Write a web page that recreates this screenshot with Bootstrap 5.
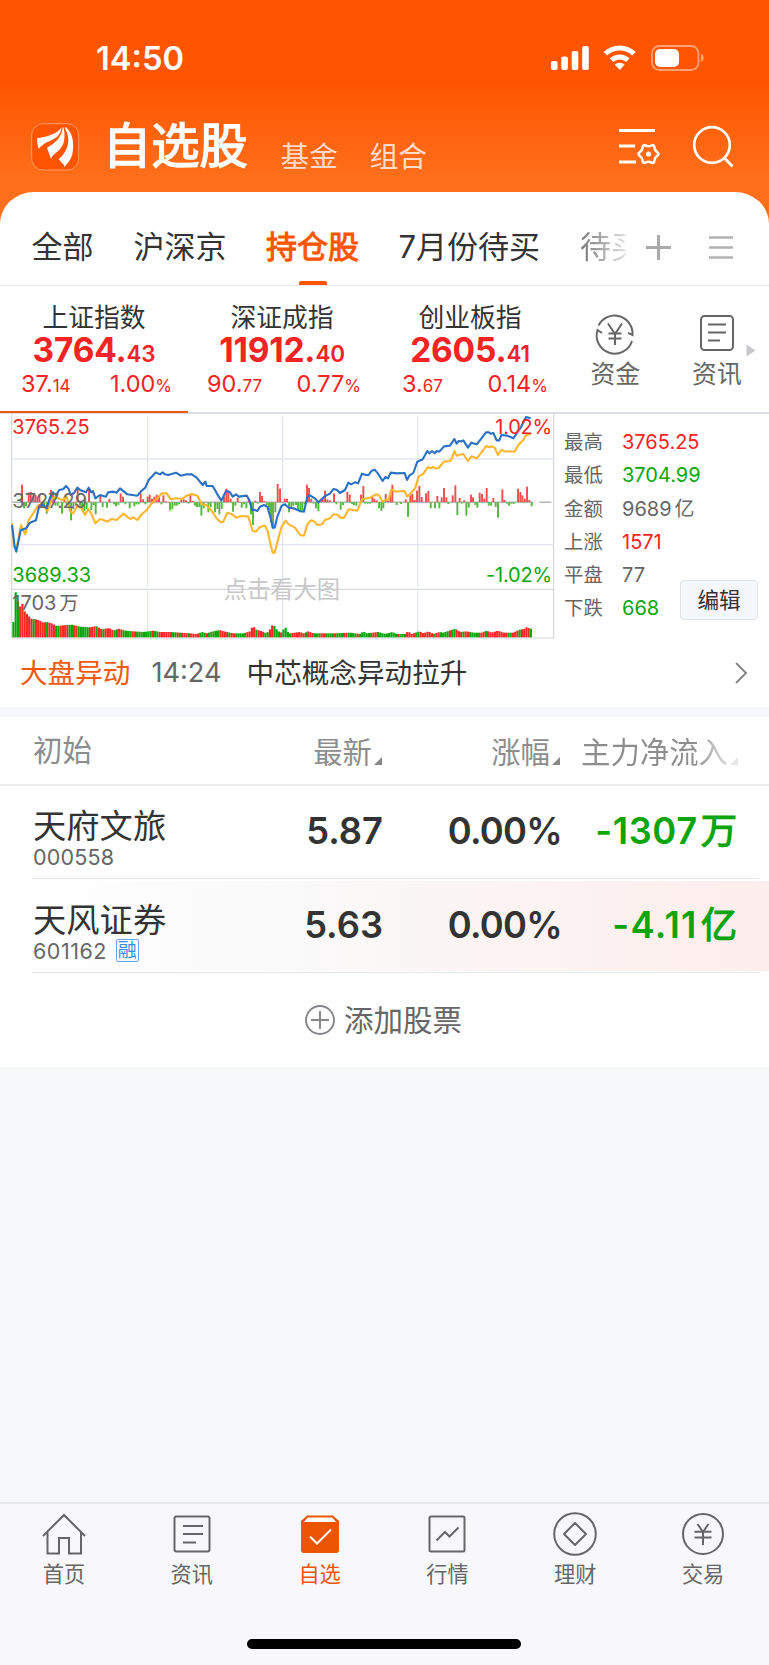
<!DOCTYPE html>
<html lang="zh-CN">
<head>
<meta charset="utf-8">
<meta name="viewport" content="width=device-width, initial-scale=1">
<title>自选股</title>
<link href="https://cdn.jsdelivr.net/npm/bootstrap@5.3.0/dist/css/bootstrap.min.css" rel="stylesheet">
<style>
:root{--ink:#333;--mute:#666;--up:#f52323;--down:#0aa50a;--brand:#ff5500}
body{font-family:Inter,"Noto Sans CJK SC",sans-serif;color:var(--ink);background:#f7f8fa;width:769px;overflow-x:hidden}
svg{display:block;flex:none;overflow:visible}
.phone{min-height:1665px;background:#f7f8fa}
.top-area{background:linear-gradient(#ff5500 0,#ff5500 80px,#ff6f1b 180px,#ff7019 100%);height:286px}
.status{height:108px;padding:0 65px 0 96px}
.clock{font-size:32.7px;font-weight:600;line-height:40px}
.brandbar{height:84px;padding:0 35px 6px 31px}
.brandbar h1{font-size:48.2px;font-weight:400;-webkit-text-stroke:1.5px #fff;line-height:60px;margin:0 1px 2px 24px}
.brandbar .sub{font-size:28.6px;line-height:36px;color:#ffdccb;margin-top:19px}
.sheet{background:#fff;border-radius:34px 34px 0 0/32px 32px 0 0;height:94px;border-bottom:1px solid #ebebee}
.tabs-row{height:93px;padding:14px 0 0 31.5px;font-size:31px;line-height:44px}
.tabs-row .tab{height:79px;padding-top:19px;white-space:nowrap}
.tab.on{color:var(--brand);-webkit-text-stroke:1px var(--brand);border:0}
.tab.on i{display:block;width:28px;height:4px;border-radius:2px 2px 0 0;background:var(--brand);margin:12px auto 0}
.fading{width:62px;margin-right:-15px;color:transparent!important;background:linear-gradient(90deg,#777,#ddd 70%,#fff 76%);-webkit-background-clip:text;background-clip:text}
.indices{height:128px;background:#fff;border-bottom:2px solid #d9dce2}
.idx{width:188px;height:127px;padding-top:15px;text-align:center}
.idx.on{border-bottom:2.5px solid #f0590e}
.idx .nm{font-size:25.8px;line-height:34px}
.idx .val{font-size:33.5px;font-weight:700;line-height:32px;color:var(--up);letter-spacing:-.2px;margin-top:-1px}
.idx .val small{font-size:22.5px;font-weight:600}
.idx .chg{font-size:23.5px;line-height:32px;color:var(--up);margin-top:-2px;padding:0 16px 0 21px}
.idx .chg small{font-size:17px}
.quick{font-size:24.8px;line-height:32px;color:var(--mute)}
.chart-row{height:227px;background:#fff;padding-left:11px}
.stats{width:215px;padding:12px 0 0 10px;font-size:19.4px;line-height:33.25px;color:var(--mute)}
.stats dl{display:grid;grid-template-columns:58px 1fr;margin:0}
.stats dt{font-weight:400}.stats dd{margin:0;font-size:20px;letter-spacing:0}
.edit{right:11px;top:166px;width:78px;height:40px;background:#f6f7fa;border:1.5px solid #dfe2e7;border-radius:4px;font-size:21.6px;color:#333;padding:0;line-height:34px}
.c-up{color:var(--up)!important}.c-down{color:var(--down)!important}
.news{height:66px;background:#fff;padding:0 22px 2px 20px;font-size:27.6px;line-height:40px}
.band{height:10px;background:#f6f7fa}
.quotes{background:#fff;height:350px}
.cols{display:grid;grid-template-columns:1fr 190px 178px 209px}
.cols-head{height:69px;border-bottom:2px solid #f0f0f3;font-size:29.4px;color:#8d8d8d;padding:4px 0 0 33px;line-height:40px}
.hd{display:flex;justify-content:flex-end;align-items:center}
.hd svg{margin:16px 0 0 2px}
.stock{height:94px;position:relative}
.cols-head+.stock{margin-top:-1px}
.stock.hot{background:linear-gradient(90deg,#fff 2%,#faf9f9 40%,#fcf2f1 75%,#fdeded) 0 2px/100% 90px no-repeat}
.stock::after{content:"";position:absolute;left:32px;right:10px;bottom:0;height:1px;background:#e6e7ea}
.stock .cols{height:94px;padding-left:33px}
.stock .nm{font-size:33.3px;line-height:38px;margin-top:22px}
.stock .code{font-size:21.5px;line-height:24px;color:var(--mute);letter-spacing:.2px}
.fig{font-size:36.3px;font-weight:600;line-height:44px;text-align:right;margin-top:24px;white-space:nowrap}
.fig .unit{font-weight:400;-webkit-text-stroke:1.1px currentColor;letter-spacing:0;margin-left:3px}
.pct{letter-spacing:-.7px;margin-right:-2px}
.tagr{font-size:19px;line-height:21px;width:23px;height:23px;border:1px solid #6aa5e8;color:#3c8ae6;border-radius:2px;margin-left:9px;text-align:center;letter-spacing:0}
.add{height:94px;font-size:29.5px;line-height:40px;color:var(--mute)}
.gap-area{height:435px;background:#f7f8fa}
.dock{height:163px;border-top:2px solid #e8e9ec;background:#f8f8fb;display:grid;grid-template-columns:repeat(6,1fr);position:relative;color:var(--mute);font-size:21.2px;line-height:28px;text-align:center;padding-right:2px}
.dock svg{margin:8px auto 4px}
.dock .on{color:#eb5503}
.homebar{left:247px;top:135px;width:274px;height:10px;border-radius:5px;background:#000}
</style>
</head>
<body>
<div class="phone">
 <header class="top-area">
  <div class="status d-flex align-items-center justify-content-between text-white pt-1">
   <span class="clock pt-1">14:50</span>
   <svg class="mt-1" width="153" height="26" viewBox="0 0 153 26" fill="#fff"><rect x="0" y="16" width="6.600" height="9" rx="2"/><rect x="10.300" y="11.500" width="6.600" height="13.500" rx="2"/><rect x="20.700" y="6" width="6.600" height="19" rx="2"/><rect x="31.200" y="1" width="6.600" height="24" rx="2"/>
    <g fill="none" stroke="#fff" stroke-width="5"><path d="M54.400 8.700a20.500 20.500 0 0 1 28.600 0"/><path d="M60.500 15.200a12 12 0 0 1 16.400 0"/></g><path d="M63.700 19.600a7.500 7.500 0 0 1 10 0l-5 5.400z"/>
    <rect x="101" y="1" width="46.500" height="24" rx="7.500" fill="none" stroke="#fff" stroke-opacity=".45" stroke-width="1.800"/><rect x="104" y="4" width="24" height="18" rx="5"/><path d="M150 9c3.500 1 3.500 7 0 8z" fill-opacity=".5"/></svg>
  </div>
  <div class="brandbar d-flex align-items-center text-white">
   <svg width="48" height="48" viewBox="32 53 144 144"><rect x="34" y="55" width="141" height="139" rx="34" fill="#ff5500" stroke="#ff9a63" stroke-width="3"/><g fill="#fff"><path d="M50 99C78 94 106 88 123 67C121 88 109 98 90 106C73 113 60 122 56 131C51 122 50 108 50 99Z"/><path d="M127 66C125 95 107 112 80 127L92 161C98 147 111 141 121 129C135 111 134 88 130 67Z"/><path d="M137 66C158 84 162 115 156 147C151 165 141 174 133 185C129 174 121 170 115 162C131 148 144 128 144 104C144 88 139 78 133 67Z"/></g></svg>
   <h1>自选股</h1><span class="sub" style="margin-left:32px">基金</span><span class="sub" style="margin-left:32px">组合</span>
   <svg class="ms-auto" width="42" height="40" viewBox="0 0 42 40" fill="none" stroke="#fff" stroke-width="2.800"><path d="M0 3.500h36M0 19h16M0 35h17"/><path transform="translate(29.500 27) scale(.93)" d="M9.390-1.900Q12.200 0 9.390 1.900Q6.580 3.800 6.340 7.190Q6.100 10.570 3.050 9.090Q0 7.600-3.050 9.090Q-6.100 10.570-6.340 7.190Q-6.580 3.800-9.390 1.900Q-12.200 0-9.390-1.900Q-6.580-3.800-6.340-7.190Q-6.100-10.570-3.050-9.090Q0-7.600 3.050-9.090Q6.100-10.570 6.340-7.190Q6.580-3.800 9.390-1.900Z"/><circle cx="29.500" cy="27" r="2.600" fill="#fff" stroke="none"/></svg>
   <svg style="margin-left:32px" width="41" height="42" viewBox="0 0 41 42" fill="none" stroke="#fff" stroke-width="2.700"><circle cx="19" cy="19" r="17.800"/><path d="M31.500 32l8 8.500"/></svg>
  </div>
  <div class="sheet"><nav class="tabs-row d-flex">
   <span class="tab">全部</span><span class="tab" style="margin-left:40px">沪深京</span><span class="tab on" style="margin-left:39.500px">持仓股<i></i></span><span class="tab" style="margin-left:39.500px">7月份待买</span><span class="tab fading" style="margin-left:40px">待买</span>
   <svg style="margin:29px 0 0 18.500px" width="25" height="25" viewBox="0 0 25 25" stroke="#aaa" stroke-width="3"><path d="M0 12.500h25M12.500 0v25"/></svg>
   <svg style="margin:30px 0 0 38px" width="24" height="24" viewBox="0 0 24 24" stroke="#b3b3b3" stroke-width="2.700"><path d="M0 1.500h24M0 11.500h24M0 21.500h24"/></svg>
  </nav></div>
 </header>
 <section class="indices d-flex">
  <div class="idx on"><div class="nm">上证指数</div><div class="val">3764.<small>43</small></div><div class="chg d-flex justify-content-between align-items-baseline"><span>37.<small>14</small></span><span>1.00<small>%</small></span></div></div>
  <div class="idx"><div class="nm">深证成指</div><div class="val">11912.<small>40</small></div><div class="chg d-flex justify-content-between align-items-baseline" style="padding:0 15px 0 19px"><span>90.<small>77</small></span><span>0.77<small>%</small></span></div></div>
  <div class="idx"><div class="nm">创业板指</div><div class="val">2605.<small>41</small></div><div class="chg d-flex justify-content-between align-items-baseline" style="padding-left:26px"><span>3.<small>67</small></span><span>0.14<small>%</small></span></div></div>
  <div class="quick d-flex" style="padding:27.500px 0 0 26.500px">
   <div><svg class="mx-auto" width="38" height="38" viewBox="0 0 38 38" fill="none" stroke="#666" stroke-width="2"><path d="M2.500 11.500A18 18 0 0 1 36.500 21l-4.500-2.200M36 27A18 18 0 0 1 1.500 16l4.500 3M12 9.500l7 10.500 7-10.500M12.500 19.500h13M12.500 24.500h13M19 20v11"/></svg><div style="margin-top:6px">资金</div></div>
   <div style="margin-left:52px"><svg class="mx-auto" width="34" height="38" viewBox="0 0 34 38" fill="none" stroke="#666" stroke-width="2"><rect x="1" y="2" width="32" height="34" rx="3.500"/><path d="M8 10.500h18M8 18.500h18M8 26.500h12"/></svg><div style="margin-top:6px">资讯</div></div>
   <svg style="margin:30px 0 0 4px" width="10" height="13" viewBox="0 0 10 13"><path d="M.5.500v12l9-6z" fill="#c8c8cc"/></svg>
  </div>
 </section>
 <section class="chart-row d-flex position-relative">
  <svg id="trend" width="543" height="227" viewBox="33 27 1629 681"></svg>
  <div class="stats"><dl><dt>最高</dt><dd class="c-up">3765.25</dd><dt>最低</dt><dd class="c-down">3704.99</dd><dt>金额</dt><dd>9689<span style="margin-left:3px">亿</span></dd><dt>上涨</dt><dd class="c-up">1571</dd><dt>平盘</dt><dd>77</dd><dt>下跌</dt><dd class="c-down">668</dd></dl></div>
  <button class="btn edit position-absolute">编辑</button>
 </section>
 <section class="news d-flex align-items-center"><span style="color:#f0590e">大盘异动</span><span style="margin-left:21px;color:#666;font-size:27.200px">14:24</span><span style="margin-left:25px">中芯概念异动拉升</span><svg class="ms-auto" width="12" height="22" viewBox="0 0 12 22" fill="none" stroke="#888" stroke-width="2"><path d="M1 1l10 10-10 10"/></svg></section>
 <div class="band"></div>
 <main class="quotes">
  <div class="cols cols-head"><div class="hd justify-content-start pb-1">初始</div><div class="hd">最新<svg width="8" height="8"><path d="M8 0v8H0z" fill="#888"/></svg></div><div class="hd">涨幅<svg width="8" height="8"><path d="M8 0v8H0z" fill="#888"/></svg></div><div class="hd" style="padding-right:31px"><span style="color:transparent;background:linear-gradient(90deg,#8d8d8d 76%,#ddd);-webkit-background-clip:text;background-clip:text">主力净流入</span><svg width="8" height="8"><path d="M8 0v8H0z" fill="#e6e6ea"/></svg></div></div>
  <div class="stock"><div class="cols"><div><div class="nm">天府文旅</div><div class="code">000558</div></div><div class="fig" style="margin-right:-1px">5.87</div><div class="fig pct">0.00%</div><div class="fig c-down" style="padding-right:32px;letter-spacing:.6px">-1307<span class="unit">万</span></div></div></div>
  <div class="stock hot"><div class="cols"><div><div class="nm">天风证券</div><div class="code d-flex"><span style="letter-spacing:.5px">601162</span><span class="tagr">融</span></div></div><div class="fig" style="margin-right:-1px">5.63</div><div class="fig pct">0.00%</div><div class="fig c-down" style="padding-right:32px;letter-spacing:1.300px">-4.11<span class="unit">亿</span></div></div></div>
  <div class="add d-flex align-items-center justify-content-center"><svg width="30" height="30" viewBox="0 0 30 30" fill="none" stroke="#85858a" stroke-width="1.900"><circle cx="15" cy="15" r="14"/><path d="M6 15h18M15 6v18"/></svg><span style="margin:0 2px 0 9px">添加股票</span></div>
 </main>
 <div class="gap-area"></div>
 <footer class="dock">
  <div><svg width="44" height="44" viewBox="0 0 44 44" fill="none" stroke="currentColor" stroke-width="2"><path d="M1 24L22 3l21 21M5.500 20v21.500H17V26h10v15.500h12V20"/></svg>首页</div>
  <div><svg width="44" height="44" viewBox="0 0 44 44" fill="none" stroke="currentColor" stroke-width="2"><rect x="4.500" y="4.500" width="35" height="35" rx="2"/><path d="M13 14h20M13 22h20M13 30.500h13"/></svg>资讯</div>
  <div class="on"><svg width="44" height="44" viewBox="0 0 44 44"><path d="M9 3.500h26l6 5.500v29q0 3-3 3H6q-3 0-3-3V9z" fill="currentColor"/><path d="M9.800 5.600h24.400l4 4.400H5.800z" fill="#fff"/><path d="M12 24.500l7 7 14-14" fill="none" stroke="#fff" stroke-width="2"/></svg>自选</div>
  <div><svg width="44" height="44" viewBox="0 0 44 44" fill="none" stroke="currentColor" stroke-width="2"><rect x="4.500" y="4.500" width="35" height="35" rx="1.500"/><path d="M11.500 28.500l8.500-8.500 4.500 4.500 9-9"/></svg>行情</div>
  <div><svg width="44" height="44" viewBox="0 0 44 44" fill="none" stroke="currentColor" stroke-width="2"><circle cx="22" cy="22" r="20.800"/><path stroke-linejoin="round" d="M22 11L33 22 22 33 11 22z"/></svg>理财</div>
  <div><svg width="44" height="44" viewBox="0 0 44 44" fill="none" stroke="currentColor" stroke-width="2"><circle cx="22" cy="22" r="20"/><path d="M16.500 12l5.500 8 5.500-8M13.500 19.800h17M13.500 25.500h17M22 20v13"/></svg>交易</div>
  <div class="homebar position-absolute"></div>
 </footer>
</div>
<script src="https://cdn.jsdelivr.net/npm/bootstrap@5.3.0/dist/js/bootstrap.bundle.min.js"></script>
<script>
// Intraday chart: index line, average line, momentum bars and volume
const index='36,360 44,425 49,440 56,405 62,376 78,370 90,353 108,346 116,310 128,298 140,310 150,278 158,262 168,270 178,255 190,252 198,243 206,252 212,270 222,264 232,248 242,256 258,262 266,248 274,262 279,258 286,280 300,270 318,275 324,262 340,260 350,263 360,250 372,260 382,268 412,272 424,258 436,248 446,225 460,210 467,202 480,208 488,202 494,208 504,210 528,203 542,212 560,208 575,208 590,218 608,240 616,230 620,243 638,243 652,268 664,287 678,258 690,262 698,275 708,268 716,275 740,272 748,285 756,315 762,314 772,318 780,305 792,300 802,305 812,340 818,368 824,368 832,335 845,302 855,298 866,308 880,310 900,318 912,320 922,275 930,271 945,280 955,292 975,273 990,266 1000,252 1010,254 1020,264 1035,255 1045,233 1053,238 1065,232 1074,235 1086,206 1098,210 1106,210 1114,198 1124,194 1134,206 1148,228 1156,216 1164,220 1172,203 1190,205 1214,204 1221,225 1228,212 1240,204 1252,170 1268,163 1282,138 1288,145 1296,138 1304,145 1310,138 1318,140 1332,124 1350,122 1363,102 1370,116 1376,108 1384,109 1390,106 1404,128 1414,113 1430,118 1442,103 1458,82 1466,82 1472,86 1480,84 1490,106 1498,106 1504,90 1522,92 1540,100 1550,85 1562,68 1578,36 1592,40';
const average='36,355 42,425 50,425 56,400 63,360 70,375 76,388 86,345 100,325 115,300 130,300 142,318 155,282 166,276 180,282 190,285 200,275 210,318 220,325 232,303 245,310 255,330 265,312 275,328 286,355 300,342 312,346 322,350 335,342 350,345 370,326 390,342 400,337 412,345 425,328 440,315 455,295 470,282 485,265 500,265 512,283 530,280 545,282 560,272 575,267 592,272 605,298 620,300 635,318 650,340 662,352 670,350 682,323 695,327 708,338 725,333 745,335 758,378 768,380 780,366 795,362 803,378 812,420 818,443 824,443 835,400 845,365 857,347 866,358 885,368 900,390 912,392 922,358 934,346 944,350 952,360 966,358 974,345 990,340 1000,328 1014,330 1020,338 1032,338 1046,313 1072,317 1086,283 1110,278 1128,268 1136,270 1148,290 1160,283 1166,284 1174,253 1186,260 1214,258 1221,275 1235,262 1246,248 1256,215 1270,206 1284,186 1292,190 1300,186 1307,190 1316,189 1332,170 1350,168 1356,160 1363,138 1370,152 1380,149 1390,147 1404,168 1414,154 1430,160 1442,145 1448,138 1458,123 1468,127 1475,124 1484,128 1494,150 1504,135 1515,139 1544,140 1555,120 1570,105 1578,90 1592,88';
const momentum=[66,52,72,-18,78,-12,86,28,92,30,100,20,106,22,112,16,118,22,126,-14,132,-14,140,-34,148,-8,153,36,159,26,166,-10,173,-10,186,-34,193,15,200,-6,207,-14,213,-54,220,-20,227,-10,233,42,240,-10,246,-18,253,-26,260,-20,267,42,274,-24,281,-8,287,-36,301,18,308,-14,321,-16,328,10,342,-6,348,-12,355,-8,362,26,369,16,376,-6,389,-18,403,-12,409,-6,416,-6,422,26,429,8,436,-6,443,16,449,22,456,10,463,16,470,22,477,16,484,-6,490,20,497,2,510,-24,517,-20,524,-10,530,-10,537,-6,544,6,551,8,558,5,565,-4,571,24,578,3,585,-10,591,-14,598,-14,604,-40,611,-18,625,-30,632,-14,645,-30,652,-20,658,-36,665,-20,672,16,679,40,685,34,692,10,699,-28,706,-10,713,12,725,-16,732,-6,739,-18,746,10,753,-36,759,-68,766,4,773,-4,780,30,786,18,793,3,800,-8,807,-25,813,-60,819,-72,826,-30,833,54,840,40,854,10,861,10,867,-30,874,-16,880,-10,888,-8,894,-26,901,-30,907,-24,914,-6,921,52,927,42,934,10,941,-4,948,-18,955,-26,962,4,968,10,975,34,982,8,989,5,1002,26,1009,-6,1022,-22,1029,-8,1042,30,1049,22,1056,-5,1062,-8,1069,-10,1083,22,1090,48,1096,-4,1103,-4,1110,-4,1117,15,1123,10,1130,5,1137,-18,1144,-26,1150,-18,1157,24,1164,4,1171,20,1177,52,1190,-8,1203,-5,1217,8,1224,-44,1231,20,1237,24,1244,6,1251,34,1258,48,1265,15,1278,26,1285,33,1292,-18,1305,-18,1312,18,1318,-18,1325,14,1332,42,1339,14,1345,-5,1358,20,1366,50,1372,-38,1379,12,1385,-4,1392,5,1399,-40,1406,-16,1413,22,1419,14,1426,-8,1432,-16,1439,28,1446,24,1453,10,1460,42,1466,-10,1473,-10,1480,12,1487,-14,1494,-46,1507,38,1513,6,1520,-4,1527,-10,1534,-4,1541,-5,1554,40,1561,30,1567,20,1574,10,1581,46,1588,6,1595,-12];
const volume=[[40,46],[46,138],[53,110],[59,90],[66,104],[72,80],[86,64],[93,56],[107,54],[120,50],[130,44],[140,46],[155,42],[170,34],[190,36],[215,38],[240,32],[270,30],[288,34],[305,24],[328,28],[340,20],[356,26],[376,20],[400,18],[430,16],[460,20],[480,16],[510,16],[540,14],[570,12],[590,10],[606,16],[620,12],[632,16],[658,22],[680,16],[700,12],[730,12],[750,18],[759,36],[766,24],[780,20],[800,12],[813,28],[819,42],[826,28],[840,14],[848,16],[854,38],[860,18],[870,12],[900,16],[910,12],[925,18],[940,12],[1000,12],[1050,14],[1080,10],[1090,18],[1100,12],[1135,16],[1155,10],[1177,16],[1190,10],[1214,10],[1224,18],[1235,10],[1258,18],[1270,12],[1285,18],[1300,10],[1318,16],[1330,14],[1366,26],[1380,16],[1400,18],[1420,14],[1445,14],[1460,20],[1475,14],[1494,20],[1510,14],[1540,14],[1555,22],[1575,26],[1581,32],[1588,26],[1600,26]];
// run lengths of equal-coloured volume bars, starting with a falling run
const runs=[3,6,1,5,1,3,2,4,2,2,5,3,1,2,1,4,2,2,4,2,7,1,2,6,2,1,1,3,1,4,3,1,5,4,1,2,5,4,1,3,2,2,3,1,4,6,1,3,3,2,4,1,3,2,4,1,6,2,9,1,3,4,2,6,1,2,4,1,2,3,1,2,5,2,1,9,2,3,1,4,2,7,1,3,2,5,1,2];
let s='<path d="M35 27V699H1661V27M35 553H1661" fill="none" stroke="#d5d8e0" stroke-width="3.500"/><path d="M35 162H1661M35 419H1661M443 34V546M848 34V546M1253 34V546M443 558V697M848 558V697M1253 558V697" stroke="#e4e7f0" stroke-width="4" fill="none"/><path d="M37 291.500H1600M1618 291.500H1654" stroke="#777" stroke-width="2.500"/>';
for(let i=0;i<momentum.length;i+=2){const h=momentum[i+1];s+=`<rect x="${momentum[i]-2.8}" y="${h>0?291-h:292}" width="5.800" height="${Math.abs(h)}" fill="${h>0?'#ee5050':'#55b83f'}"/>`}
let left=runs[0],r=0,k=0;
for(let x=40;x<1598;x+=6.75){
 while(k<volume.length-2&&volume[k+1][0]<x)k++;
 const a=volume[k],b=volume[k+1],h=a[1]+(b[1]-a[1])*Math.max(0,Math.min(1,(x-a[0])/(b[0]-a[0])));
 s+=`<rect x="${x-3}" y="${697-h}" width="6.500" height="${h}" fill="${r%2?'#fa2828':'#0aa50a'}"/>`;
 if(--left===0){r++;left=runs[r%runs.length]}
}
s+=`<polyline points="${average}" fill="none" stroke="#ffb62e" stroke-width="6.300" stroke-linejoin="round"/><polyline points="${index}" fill="none" stroke="#2c70c4" stroke-width="6.300" stroke-linejoin="round"/>`;
const t=(x,y,c,v,a='start',z=60,ls=-.1)=>`<text x="${x}" y="${y}" fill="${c}" font-size="${z}" letter-spacing="${ls}" text-anchor="${a}">${v}</text>`;
s+=t(37,88,'#f52323','3765.25')+t(37,310,'#6a6a6a','3727.29')+t(37,532,'#0aa50a','3689.33')+t(37,615,'#666','1703<tspan dx="9" font-size="58">万</tspan>')+t(1656,88,'#f52323','1.02%','end',60,-.7)+t(1656,532,'#0aa50a','-1.02%','end',60,-.5)+t(671,579,'#c8c8c8','点击看大图','start',70);
document.getElementById('trend').innerHTML=s;
</script>
</body>
</html>
